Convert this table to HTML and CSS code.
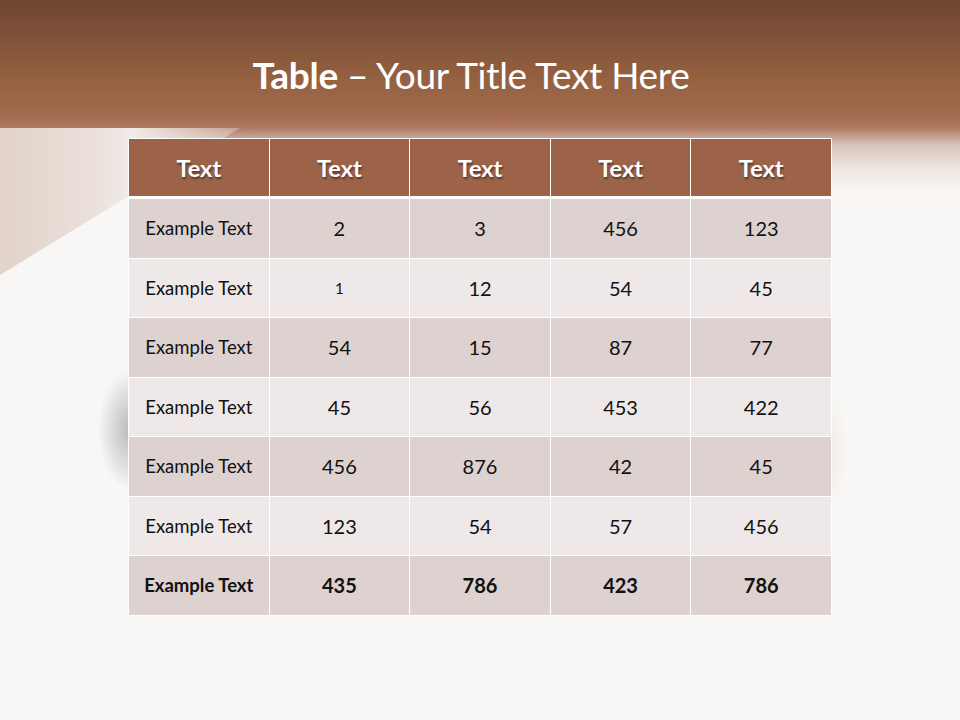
FILE: index.html
```html
<!DOCTYPE html>
<html>
<head>
<meta charset="utf-8">
<link rel="stylesheet" href="styles.css">
</head>
<body>
<div class="slide">
  <h1 class="title"><b>Table</b> – Your Title Text Here</h1>
  <table class="data">
    <thead>
      <tr><th>Text</th><th>Text</th><th>Text</th><th>Text</th><th>Text</th></tr>
    </thead>
    <tbody>
      <tr class="dark"><td class="lbl">Example Text</td><td>2</td><td>3</td><td>456</td><td>123</td></tr>
      <tr class="light"><td class="lbl">Example Text</td><td class="small">1</td><td>12</td><td>54</td><td>45</td></tr>
      <tr class="dark"><td class="lbl">Example Text</td><td>54</td><td>15</td><td>87</td><td>77</td></tr>
      <tr class="light"><td class="lbl">Example Text</td><td>45</td><td>56</td><td>453</td><td>422</td></tr>
      <tr class="dark"><td class="lbl">Example Text</td><td>456</td><td>876</td><td>42</td><td>45</td></tr>
      <tr class="light"><td class="lbl">Example Text</td><td>123</td><td>54</td><td>57</td><td>456</td></tr>
      <tr class="dark total"><td class="lbl">Example Text</td><td>435</td><td>786</td><td>423</td><td>786</td></tr>
    </tbody>
  </table>
</div>
</body>
</html>
```
FILE: styles.css
```css
html, body {
  margin: 0;
  padding: 0;
  width: 960px;
  height: 720px;
  overflow: hidden;
}
body {
  font-family: Lato, "Open Sans", sans-serif;
  background:
    radial-gradient(ellipse 32px 60px at 130px 430px, rgba(110,110,110,0.45), rgba(110,110,110,0) 100%),
    radial-gradient(ellipse 14px 60px at 832px 450px, rgba(210,205,200,0.25), rgba(210,205,200,0) 100%),
    linear-gradient(to bottom, #704731 0px, #7c4f38 30px, #93603f 75px, #a46b50 118px, #b07a62 128px, #d8c5bc 145px, #f0e8e4 170px, #f9f7f5 195px, #f9f7f5 100%);
  position: relative;
}
body::before {
  content: "";
  position: absolute;
  left: 0;
  top: 128px;
  width: 240px;
  height: 147px;
  background: linear-gradient(to right, #e2d3cb 0%, #e9ded8 35%, #f2ebe8 55%, rgba(249,247,245,0.3) 100%);
  clip-path: polygon(0 0, 100% 0, 0 100%);
}
.slide {
  position: relative;
  display: flex;
  flex-direction: column;
  align-items: center;
  padding-top: 50px;
}
.title {
  margin: 0;
  padding-right: 18px;
  color: #fff;
  font-weight: 400;
  font-size: 37px;
  line-height: 50px;
  letter-spacing: -0.3px;
}
.title b { font-weight: 700; }
.data {
  margin-top: 38px;
  border-collapse: collapse;
  width: 704px;
  table-layout: fixed;
}
.data th, .data td {
  border: 1px solid #fff;
  text-align: center;
  padding: 0;
  color: #111;
}
.data th {
  background: #9c6349;
  color: #fff;
  height: 57px;
  font-size: 23.5px;
  font-weight: 700;
  text-shadow: 1px 2px 2px rgba(0,0,0,0.45);
  border-bottom: 3px solid #fff;
}
.data td {
  height: 58.5px;
  font-size: 20px;
}
.data td.lbl { font-size: 18.5px; }
.data td.small { font-size: 15px; }
.dark td { background: #ddd2cf; }
.light td { background: #eee8e8; }
.total td { font-weight: 700; }
```
